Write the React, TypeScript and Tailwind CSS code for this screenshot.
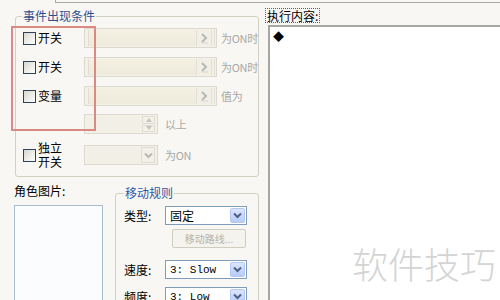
import React from "react";

const FONT = '"Noto Sans CJK SC", "Liberation Sans", sans-serif';

function Check() {
  return (
    <div className="w-[13px] h-[13px] shrink-0 border border-[#2f4356] bg-gradient-to-br from-[#d9d8d0] to-white" />
  );
}

function RightChevron() {
  return (
    <svg width="9" height="12" viewBox="0 0 9 12">
      <path d="M2 2 L6 6 L2 10" stroke="#b9b9b3" strokeWidth="2" fill="none" />
      <path d="M1 11 H8" stroke="#d6d4ca" strokeWidth="1" />
    </svg>
  );
}

function DownChevron({ color = "#b9b9b3" }: { color?: string }) {
  return (
    <svg width="9" height="7" viewBox="0 0 9 7">
      <path d="M1 1.5 L4.5 5 L8 1.5" stroke={color} strokeWidth="2" fill="none" />
    </svg>
  );
}

function DisabledCombo() {
  return (
    <div className="w-[133px] h-[20px] shrink-0 flex border border-[#dcdace] bg-[#f3f1e7] p-[1px]">
      <div className="flex-1 border-l border-[#e0ded2] bg-gradient-to-b from-[#f4f0e2] to-[#eeeadc] ml-[2px]" />
      <div className="w-[16px] shrink-0 flex items-center justify-center border-x border-[#e2e0d6] bg-[#f1efe6]">
        <RightChevron />
      </div>
      <div className="w-[3px] shrink-0 border-r border-[#e2e0d6]" />
    </div>
  );
}

function SpinBox() {
  return (
    <div className="w-[74px] h-[20px] shrink-0 flex border border-[#dcdace] bg-[#f3f1e7] p-[1px]">
      <div className="flex-1 ml-[2px] bg-[#f1efe6]" />
      <div className="w-[13px] shrink-0 flex flex-col gap-[1px] mr-[1px]">
        <div className="flex-1 border border-[#e0ded4] flex items-center justify-center">
          <svg width="6" height="4" viewBox="0 0 6 4"><path d="M0 4 L3 0 L6 4Z" fill="#c6c5bd" /></svg>
        </div>
        <div className="flex-1 border border-[#e0ded4] flex items-center justify-center">
          <svg width="6" height="4" viewBox="0 0 6 4"><path d="M0 0 L3 4 L6 0Z" fill="#c6c5bd" /></svg>
        </div>
      </div>
    </div>
  );
}

function SmallDisabledCombo() {
  return (
    <div className="w-[74px] h-[20px] shrink-0 flex border border-[#dcdace] bg-[#f3f1e7] p-[1px]">
      <div className="flex-1 ml-[2px] bg-[#f1efe6]" />
      <div className="w-[14px] shrink-0 mr-[1px] flex items-center justify-center border border-[#e0ded4]">
        <DownChevron />
      </div>
    </div>
  );
}

function XPSelect({ text, mono }: { text: string; mono?: boolean }) {
  return (
    <div className="w-[82px] h-[19px] shrink-0 flex border border-[#7f9db9] bg-white p-[1px]">
      <div
        className={
          "flex-1 flex items-center pl-[3px] text-black whitespace-nowrap " +
          (mono ? "text-[11px] font-['Liberation_Mono',monospace]" : "text-[12px]")
        }
      >
        {text}
      </div>
      <div className="w-[15px] shrink-0 flex items-center justify-center rounded-[2px] border border-[#b4c8f6] bg-gradient-to-b from-[#dce6fd] to-[#b7cbf8]">
        <DownChevron color="#4d6185" />
      </div>
    </div>
  );
}

function GrayText({ children }: { children: React.ReactNode }) {
  return (
    <span className="text-[11px] leading-[14px] text-[#a8a8a4] whitespace-nowrap tracking-[-0.3px]">
      {children}
    </span>
  );
}

export default function App() {
  return (
    <div
      className="relative w-[500px] h-[300px] overflow-hidden bg-[#f8f7f3] flex flex-col text-[12px] leading-[14px] text-black"
      style={{ fontFamily: FONT }}
    >
      {/* top strip */}
      <div className="h-[3px] shrink-0 flex">
        <div className="w-[55px] shrink-0" />
        <div className="flex-1 border-l border-b border-[#a9a9a5]" />
      </div>

      <div className="flex-1 flex min-h-0">
        {/* left column */}
        <div className="w-[263px] shrink-0 flex flex-col">
          <fieldset className="mt-[6px] ml-[15px] w-[244px] h-[168px] shrink-0 border border-[#d3d1c4] rounded-[3px] p-0">
            <legend className="ml-[6px] px-[1px] text-[12px] leading-[14px] text-[#2c4f90]">事件出现条件</legend>
            <div className="pt-[5px] pl-[7px] flex flex-col">
              <div className="flex items-center h-[20px]">
                <div className="w-[61px] shrink-0 flex items-center gap-[2px]">
                  <Check />
                  <span>开关</span>
                </div>
                <DisabledCombo />
                <span className="ml-[4px] whitespace-nowrap"><GrayText>为ON时</GrayText></span>
              </div>
              <div className="flex items-center h-[20px] mt-[9px]">
                <div className="w-[61px] shrink-0 flex items-center gap-[2px]">
                  <Check />
                  <span>开关</span>
                </div>
                <DisabledCombo />
                <span className="ml-[4px] whitespace-nowrap"><GrayText>为ON时</GrayText></span>
              </div>
              <div className="flex items-center h-[20px] mt-[9px]">
                <div className="w-[61px] shrink-0 flex items-center gap-[2px]">
                  <Check />
                  <span>变量</span>
                </div>
                <DisabledCombo />
                <span className="ml-[4px] whitespace-nowrap"><GrayText>值为</GrayText></span>
              </div>
              <div className="flex items-center h-[20px] mt-[8px]">
                <div className="w-[61px] shrink-0" />
                <SpinBox />
                <span className="ml-[7px] whitespace-nowrap"><GrayText>以上</GrayText></span>
              </div>
              <div className="flex items-center h-[20px] mt-[11px]">
                <div className="w-[61px] shrink-0 flex items-center gap-[2px]">
                  <Check />
                  <div className="flex flex-col text-[12px] leading-[14px]">
                    <span>独立</span>
                    <span>开关</span>
                  </div>
                </div>
                <SmallDisabledCombo />
                <span className="ml-[7px] whitespace-nowrap"><GrayText>为ON</GrayText></span>
              </div>
            </div>
          </fieldset>

          <div className="flex mt-[7px]">
            <div className="ml-[14px] w-[89px] shrink-0 flex flex-col">
              <span>角色图片:</span>
              <div className="mt-[7px] h-[100px] border border-[#a9bdd0] bg-[#fbfcfe]" />
            </div>
            <fieldset className="ml-[12px] mt-[2px] w-[144px] h-[130px] shrink-0 border border-[#d3d1c4] rounded-[3px] p-0">
              <legend className="ml-[8px] px-[1px] text-[12px] leading-[14px] text-[#2c56a8]">移动规则</legend>
              <div className="pt-[6px] pl-[8px] flex flex-col">
                <div className="flex items-center h-[19px]">
                  <span className="w-[41px] shrink-0">类型:</span>
                  <XPSelect text="固定" />
                </div>
                <div className="flex mt-[4px] ml-[48px]">
                  <div className="w-[74px] h-[19px] border border-[#cfcdc2] rounded-[2px] bg-[#f4f3ee] flex items-center justify-center text-[10px] leading-[12px] text-[#b4b3ac]">
                    移动路线...
                  </div>
                </div>
                <div className="flex items-center h-[19px] mt-[12px]">
                  <span className="w-[41px] shrink-0">速度:</span>
                  <XPSelect text="3: Slow" mono />
                </div>
                <div className="flex items-center h-[19px] mt-[8px]">
                  <span className="w-[41px] shrink-0">频度:</span>
                  <XPSelect text="3: Low" mono />
                </div>
              </div>
            </fieldset>
          </div>
        </div>

        {/* right column */}
        <div className="flex-1 flex flex-col min-w-0">
          <div className="mt-[5px] ml-[2px] self-start border border-dotted border-[#606060] px-[1px] leading-[13px]">
            执行内容:
          </div>
          <div className="mt-[2px] ml-[5px] -mr-[2px] flex-1 border-t-2 border-l-2 border-t-[#a6a6a2] border-l-[#a6a6a2] bg-white pl-[3px] pt-[2px]">
            <span className="text-[11px] leading-[12px]">◆</span>
          </div>
        </div>
      </div>

      {/* watermark */}
      <div className="absolute left-[352px] top-[243px] text-[36px] leading-[40px] font-light text-[#d4d4d4] whitespace-nowrap">
        软件技巧
      </div>

      {/* red highlight rectangle */}
      <div className="absolute left-[11px] top-[26px] w-[85px] h-[105px] border-2 border-[#d98a82] pointer-events-none" />
    </div>
  );
}
